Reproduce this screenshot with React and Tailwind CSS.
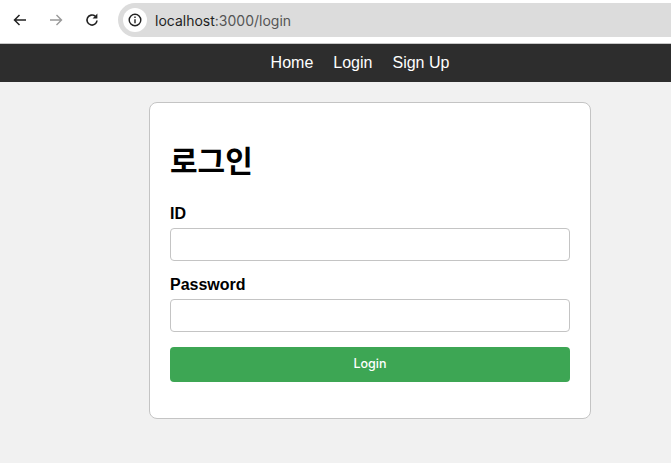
import React from "react";

const Back = ({ color }) => (
  <svg width="16" height="16" viewBox="0 0 16 16" fill="none" stroke={color} strokeWidth="1.5">
    <path d="M14 8H2.5M7.5 3L2.5 8l5 5" />
  </svg>
);
const Fwd = ({ color }) => (
  <svg width="16" height="16" viewBox="0 0 16 16" fill="none" stroke={color} strokeWidth="1.4">
    <path d="M2 8h11.5M8.5 3l5 5-5 5" />
  </svg>
);

export default function App() {
  return (
    <div className="h-[463px] w-[671px] overflow-hidden bg-[#f1f1f1] font-['Liberation_Sans','Noto_Sans_CJK_KR',sans-serif] text-black">
      <div className="flex h-[44px] items-center border-b border-[#c8c8c8] bg-white pb-[3px]">
        <div className="ml-[12px] flex w-[16px]"><Back color="#222" /></div>
        <div className="ml-[20px] flex w-[16px]"><Fwd color="#999" /></div>
        <div className="ml-[20px] flex w-[16px]">
          <svg width="16" height="16" viewBox="0 0 16 16" fill="none" stroke="#222" strokeWidth="1.6">
            <path d="M13 8.5A5 5 0 1 1 11.2 4.2" />
            <path d="M13.4 1.6v4.8H8.6z" fill="#222" stroke="none" />
          </svg>
        </div>
        <div className="ml-[18px] flex h-[34px] flex-1 items-center rounded-l-full bg-[#dcdcdc] pl-[5px] font-['Inter',sans-serif]">
          <div className="flex h-[24px] w-[24px] items-center justify-center rounded-full bg-white">
            <svg width="14" height="14" viewBox="0 0 14 14" fill="none" stroke="#222" strokeWidth="1.4">
              <circle cx="7" cy="7" r="5.8" />
              <path d="M7 6.2v4M7 3.6v1.5" />
            </svg>
          </div>
          <span className="ml-[8px] text-[14px] text-[#1f1f1f]">localhost<span className="text-[#555]">:3000/login</span></span>
        </div>
      </div>
      <nav className="flex h-[38px] items-center justify-center gap-[20px] bg-[#2d2d2d] pl-[49px] text-[16px] text-white">
        <a>Home</a>
        <a>Login</a>
        <a>Sign Up</a>
      </nav>
      <main className="ml-[149px] mt-[20px] h-[317px] w-[442px] rounded-[8px] border border-[#c4c4c4] bg-white px-[20px] pt-[38px]">
        <h1 className="h-[41px] text-[30px] leading-[41px] font-bold">로그인</h1>
        <label className="mt-[23px] block text-[16px] leading-[18px] font-bold">ID</label>
        <input className="mt-[5px] block h-[33px] w-full rounded-[4px] border border-[#c4c4c4] bg-white" />
        <label className="mt-[15px] block text-[16px] leading-[18px] font-bold">Password</label>
        <input className="mt-[5px] block h-[33px] w-full rounded-[4px] border border-[#c4c4c4] bg-white" />
        <button className="mt-[15px] block h-[35px] w-full rounded-[4px] bg-[#3da654] text-center font-['Inter',sans-serif] text-[12.5px] font-medium text-white">Login</button>
      </main>
    </div>
  );
}
